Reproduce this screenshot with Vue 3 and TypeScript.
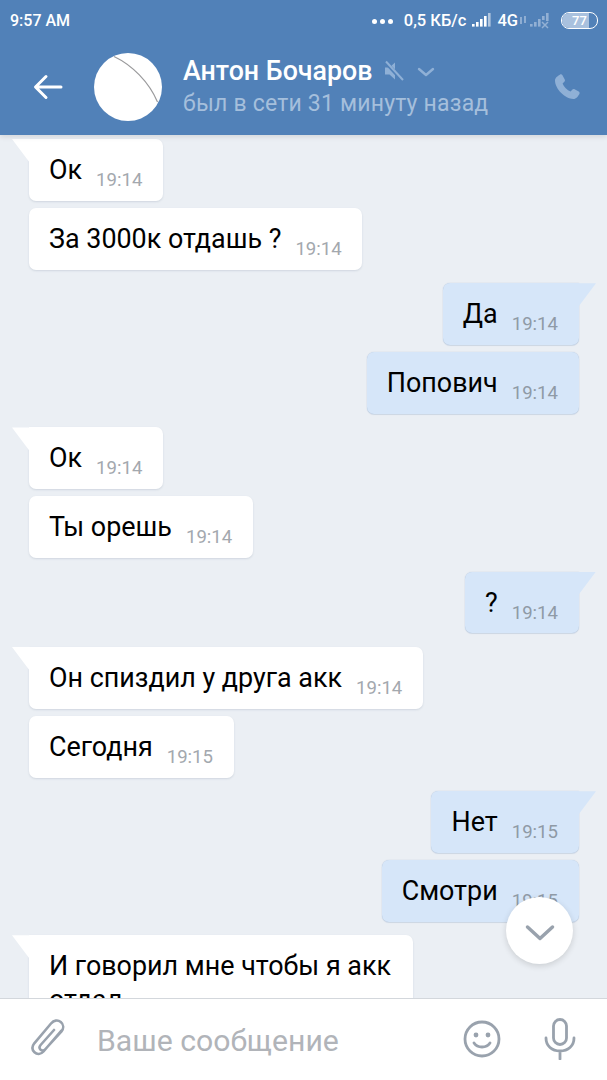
<template>
  <div class="screen">
    <header class="top">
      <div class="status">
        <span class="clock">9:57 AM</span>
        <div class="status-right">
          <span class="dots"><i></i><i></i><i></i></span>
          <span class="speed">0,5 КБ/с</span>
          <svg class="bars" width="20" height="16" viewBox="0 0 20 16">
            <rect x="0" y="12" width="2.6" height="2.6" fill="#fff" />
            <rect x="4" y="10" width="2.6" height="4.6" fill="#fff" />
            <rect x="8" y="7" width="2.6" height="7.6" fill="#fff" />
            <rect x="12" y="4" width="2.6" height="10.6" fill="#fff" />
            <rect x="16" y="1" width="2.6" height="13.6" fill="#fff" opacity="0.55" />
          </svg>
          <span class="speed net">4G</span>
          <svg class="arrows" width="8" height="10" viewBox="0 0 8 10">
            <path d="M2 9V2M6 1v7" stroke="#a9c1de" stroke-width="1.4" />
          </svg>
          <svg class="bars off" width="22" height="17" viewBox="0 0 22 17">
            <rect x="0" y="12" width="2.6" height="2.6" fill="#92b0d4" />
            <rect x="4" y="10" width="2.6" height="4.6" fill="#92b0d4" />
            <rect x="8" y="7" width="2.6" height="7.6" fill="#92b0d4" />
            <rect x="12" y="4" width="2.6" height="4" fill="#92b0d4" />
            <rect x="16" y="1" width="2.6" height="8" fill="#92b0d4" />
            <path d="M12 10l6 6M18 10l-6 6" stroke="#92b0d4" stroke-width="1.5" />
          </svg>
          <div class="battery"><span class="level"></span><b>77</b></div>
        </div>
      </div>
      <div class="bar">
        <svg class="back" width="30" height="28" viewBox="0 0 30 28" fill="none">
          <path d="M28 14H3M13 3.5 2.5 14 13 24.5" stroke="#fff" stroke-width="3" stroke-linecap="round" stroke-linejoin="round" />
        </svg>
        <svg class="avatar" width="68" height="68" viewBox="0 0 68 68">
          <circle cx="34" cy="34" r="34" fill="#fff" />
          <path d="M20 3.5C38 12 55 29 63.500 49" fill="none" stroke="#9a9a9c" stroke-width="1.2" />
        </svg>
        <div class="who">
          <div class="name-row">
            <span class="name">Антон Бочаров</span>
            <svg class="mute" width="20" height="22" viewBox="0 0 20 22">
              <path d="M1 7.500h4.500L11 2.500v17l-5.500-5H1z" fill="#8fb0d6" />
              <path d="M1.500 2 18 20" stroke="#5181b8" stroke-width="4" />
              <path d="M2 1.500 19 20" stroke="#8fb0d6" stroke-width="2" />
            </svg>
            <svg class="caret" width="18" height="10" viewBox="0 0 18 10" fill="none">
              <path d="M2 2l7 6 7-6" stroke="#8fb0d6" stroke-width="2.400" stroke-linecap="round" stroke-linejoin="round" />
            </svg>
          </div>
          <div class="seen">был в сети 31 минуту назад</div>
        </div>
        <svg class="phone" width="32" height="32" viewBox="0 0 24 24">
          <path d="M6.600 2.800c.7-.5 1.600-.3 2 .4l1.700 3.100c.3.600.2 1.300-.3 1.800L8.700 9.300c.9 2.500 3.400 5 6 6l1.200-1.300c.5-.5 1.200-.6 1.800-.3l3.100 1.700c.7.400.9 1.300.4 2-.9 1.500-2.300 3.600-4.400 3.600C10.500 21 3 13.400 3 7.200c0-2.100 2.100-3.500 3.600-4.400z" fill="#8fb0d6" />
        </svg>
      </div>
    </header>

    <main class="feed">
      <section v-for="(group, g) in groups" :key="g" class="group" :class="group.side">
        <div
          v-for="(msg, i) in group.items"
          :key="i"
          class="bubble"
          :class="{ first: i === 0 }"
        >
          <span class="text">{{ msg.text }}</span>
          <span v-if="msg.time" class="time">{{ msg.time }}</span>
        </div>
      </section>
    </main>

    <button class="down" aria-label="Вниз">
      <svg width="30" height="18" viewBox="0 0 30 18" fill="none">
        <path d="M2.500 3 15 14.500 27.500 3" stroke="#99a2ad" stroke-width="3.500" stroke-linecap="round" stroke-linejoin="round" />
      </svg>
    </button>

    <footer class="compose">
      <svg class="clip" width="36" height="42" viewBox="0 0 36 42" fill="none">
        <path d="M31 13 13.500 33.500c-2.800 3.200-6.700 3-9 .8-2.600-2.500-2.500-6-.2-9L21 5.500c2.800-3.200 6.700-4 9.800-1.500 3 2.500 3 6.500.7 9.300L15.500 31c-1.500 1.800-3.600 1.800-4.900.7-1.400-1.200-1.300-3.100 0-4.700L24 12" stroke="#99a2ad" stroke-width="2.600" stroke-linecap="round" />
      </svg>
      <span class="placeholder">Ваше сообщение</span>
      <svg class="smile" width="38" height="38" viewBox="0 0 38 38" fill="none">
        <circle cx="19" cy="19" r="17" stroke="#99a2ad" stroke-width="2.800" />
        <circle cx="13" cy="15" r="2.400" fill="#99a2ad" />
        <circle cx="25" cy="15" r="2.400" fill="#99a2ad" />
        <path d="M11 23c2 3 5 4 8 4s6-1 8-4" stroke="#99a2ad" stroke-width="2.800" stroke-linecap="round" />
      </svg>
      <svg class="mic" width="32" height="42" viewBox="0 0 32 42" fill="none">
        <rect x="9.500" y="1.500" width="13" height="25" rx="6.500" stroke="#99a2ad" stroke-width="2.800" />
        <path d="M2 20c0 8 6 13 14 13s14-5 14-13M16 33v8" stroke="#99a2ad" stroke-width="2.800" stroke-linecap="round" />
      </svg>
    </footer>
  </div>
</template>

<script setup lang="ts">
interface Message {
  text: string;
  time?: string;
}

interface Group {
  side: "in" | "out";
  items: Message[];
}

const groups: Group[] = [
  {
    side: "in",
    items: [
      { text: "Ок", time: "19:14" },
      { text: "За 3000к отдашь ?", time: "19:14" },
    ],
  },
  {
    side: "out",
    items: [
      { text: "Да", time: "19:14" },
      { text: "Попович", time: "19:14" },
    ],
  },
  {
    side: "in",
    items: [
      { text: "Ок", time: "19:14" },
      { text: "Ты орешь", time: "19:14" },
    ],
  },
  { side: "out", items: [{ text: "?", time: "19:14" }] },
  {
    side: "in",
    items: [
      { text: "Он спиздил у друга акк", time: "19:14" },
      { text: "Сегодня", time: "19:15" },
    ],
  },
  {
    side: "out",
    items: [
      { text: "Нет", time: "19:15" },
      { text: "Смотри", time: "19:15" },
    ],
  },
  { side: "in", items: [{ text: "И говорил мне чтобы я акк отдал" }] },
];
</script>

<style>
html,
body {
  margin: 0;
  overflow: hidden;
}
</style>

<style scoped>
.screen {
  position: relative;
  display: flex;
  flex-direction: column;
  width: 607px;
  height: 1080px;
  overflow: hidden;
  background: #ebeff4;
  font-family: Roboto, "Liberation Sans", sans-serif;
}

.top {
  flex: none;
  height: 135px;
  background: #5181b8;
  box-shadow: 0 2px 5px rgba(0, 0, 0, 0.1);
  z-index: 1;
}

.status {
  display: flex;
  justify-content: space-between;
  align-items: center;
  height: 40px;
  padding: 0 9px 0 10px;
  color: #fff;
}

.clock {
  font-size: 16px;
  font-weight: 500;
}

.status-right {
  display: flex;
  align-items: center;
}

.dots {
  display: flex;
  gap: 3px;
  margin: 3px 11px 0 0;
}

.dots i {
  width: 5px;
  height: 5px;
  border-radius: 50%;
  background: #fff;
}

.speed {
  font-size: 16.500px;
  font-weight: 500;
}

.bars {
  margin-left: 6px;
}

.net {
  margin-left: 5px;
}

.arrows {
  margin-left: 1px;
}

.bars.off {
  margin-left: 3px;
}

.battery {
  position: relative;
  width: 35px;
  height: 15px;
  margin-left: 9px;
  border: 1.500px solid #fff;
  border-radius: 8px;
  overflow: hidden;
  text-align: center;
  font-size: 13px;
  line-height: 15px;
}

.battery b {
  position: relative;
  font-weight: 500;
}

.level {
  position: absolute;
  left: 0;
  top: 0;
  bottom: 0;
  width: 77%;
  background: #a9c1de;
}

.bar {
  display: flex;
  align-items: center;
  height: 95px;
  padding-bottom: 2px;
  box-sizing: border-box;
}

.back {
  margin-left: 33px;
}

.avatar {
  margin-left: 31px;
}

.who {
  flex: 1;
  margin-left: 21px;
}

.name-row {
  display: flex;
  align-items: center;
  height: 34px;
}

.name {
  color: #fff;
  font-size: 26.800px;
  font-weight: 500;
}

.mute {
  margin-left: 11px;
}

.caret {
  margin-left: 13px;
  margin-top: 2px;
}

.seen {
  margin-top: 1px;
  color: #a5bfdc;
  font-size: 23px;
  line-height: 30px;
  letter-spacing: 0.2px;
}

.phone {
  margin-right: 24px;
}

.feed {
  flex: 1;
  display: flex;
  flex-direction: column;
  gap: 13.600px;
  min-height: 0;
  overflow: hidden;
  padding: 4px 28px 0 29px;
}

.group {
  display: flex;
  flex-direction: column;
  gap: 7px;
}

.group.in {
  align-items: flex-start;
}

.group.out {
  align-items: flex-end;
}

.bubble {
  position: relative;
  flex: none;
  display: flex;
  align-items: flex-start;
  box-sizing: border-box;
  min-height: 61.800px;
  padding: 14px 20.500px 13.800px 20px;
  border-radius: 7px;
  background: #fff;
  box-shadow: 0 1px 2px rgba(70, 90, 120, 0.16);
}

.out .bubble {
  padding-right: 21px;
  background: #d6e6f9;
  box-shadow: 0 0 1px rgba(70, 110, 160, 0.35), 0 1px 1px rgba(70, 110, 160, 0.15);
}

.bubble.first::before {
  content: "";
  position: absolute;
  top: 0;
  width: 18px;
  height: 24px;
}

.in .bubble.first {
  border-top-left-radius: 0;
}

.in .bubble.first::before {
  left: -17px;
  background: #fff;
  clip-path: polygon(0 0, 100% 0, 100% 100%);
}

.out .bubble.first {
  border-top-right-radius: 0;
}

.out .bubble.first::before {
  right: -17px;
  background: #d6e6f9;
  clip-path: polygon(0 0, 100% 0, 0 100%);
}

.text {
  width: fit-content;
  max-width: 343px;
  color: #000;
  font-size: 26.900px;
  line-height: 34px;
}

.time {
  flex: none;
  margin: 16px 0 -4px 14px;
  color: #a3a8ae;
  font-size: 18.600px;
  line-height: 22px;
}

.out .time {
  color: #8f9aa6;
}

.down {
  position: absolute;
  left: 506px;
  top: 897px;
  display: flex;
  align-items: center;
  justify-content: center;
  width: 67px;
  height: 67px;
  padding: 4px 0 0;
  border: 0;
  border-radius: 50%;
  background: #fff;
  box-shadow: 0 2px 6px rgba(0, 0, 0, 0.14);
}

.compose {
  flex: none;
  display: flex;
  align-items: center;
  box-sizing: border-box;
  height: 82px;
  padding-bottom: 2px;
  background: #fff;
  border-top: 1.500px solid #d3d7dc;
  z-index: 1;
}

.clip {
  margin-left: 30px;
}

.placeholder {
  flex: 1;
  margin-left: 31px;
  padding-top: 3px;
  color: #b1b4b9;
  font-size: 30.200px;
}

.smile {
  margin-right: 43px;
}

.mic {
  margin-right: 31px;
}
</style>
